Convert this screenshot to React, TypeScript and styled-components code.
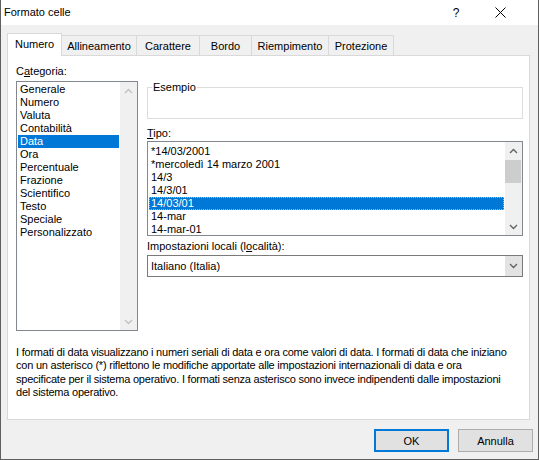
import React from 'react';
import styled, { createGlobalStyle } from 'styled-components';

const GlobalStyle = createGlobalStyle`
  html, body {
    margin: 0;
    padding: 0;
    background: #f0f0f0;
  }
  body {
    font-family: "Segoe UI", "Liberation Sans", Arial, sans-serif;
    font-size: 11px;
    color: #000000;
  }
  * {
    box-sizing: border-box;
  }
`;

const Window = styled.div`
  width: 539px;
  height: 460px;
  display: flex;
  flex-direction: column;
  background: #f0f0f0;
  border: 1px solid #5f5f5f;
  border-top: none;
`;

const TitleBar = styled.div`
  height: 25px;
  flex: none;
  display: flex;
  align-items: center;
  background: #ffffff;
  padding-left: 3px;
`;

const TitleText = styled.div`
  flex: 1;
  font-size: 11px;
  padding-bottom: 1px;
`;

const CaptionButton = styled.div`
  width: 44px;
  height: 25px;
  display: flex;
  align-items: center;
  justify-content: center;
  font-size: 12px;
  &:last-child {
    margin-right: 16px;
  }
`;

const Body = styled.div`
  flex: 1;
  display: flex;
  flex-direction: column;
  padding: 8px 6px 0 6px;
`;

const TabStrip = styled.div`
  height: 22px;
  display: flex;
  align-items: flex-end;
  position: relative;
  z-index: 1;
`;

const Tab = styled.div<{ $w: number; $active?: boolean }>`
  width: ${(p) => p.$w}px;
  height: ${(p) => (p.$active ? 23 : 20)}px;
  margin-bottom: ${(p) => (p.$active ? -1 : 0)}px;
  display: flex;
  align-items: center;
  justify-content: center;
  padding-top: ${(p) => (p.$active ? 0 : 1)}px;
  padding-bottom: ${(p) => (p.$active ? 2 : 0)}px;
  background: ${(p) => (p.$active ? '#ffffff' : '#f0f0f0')};
  border: 1px solid #d9d9d9;
  border-bottom: none;
  & + & {
    margin-left: -1px;
  }
`;

const Panel = styled.div`
  height: 365px;
  flex: none;
  margin-right: 2px;
  background: #ffffff;
  border: 1px solid #d9d9d9;
  padding: 9px 6px 0 8px;
  display: grid;
  grid-template-columns: 122px 376px;
  column-gap: 9px;
  align-content: start;
`;

const Column = styled.div`
  display: flex;
  flex-direction: column;
`;

const Label = styled.div<{ $gap?: number; $top?: number }>`
  height: 13px;
  line-height: 13px;
  margin-top: ${(p) => p.$top ?? 0}px;
  margin-bottom: ${(p) => p.$gap ?? 3}px;
  white-space: nowrap;
`;

const GroupBox = styled.fieldset`
  margin: 16px 0 0 0;
  height: 38px;
  padding: 0 4px;
  border: 1px solid #dcdcdc;
  min-width: 0;
`;

const Legend = styled.legend`
  padding: 0 1px;
  line-height: 13px;
`;

const ListBox = styled.div<{ $h: number }>`
  height: ${(p) => p.$h}px;
  border: 1px solid #828790;
  background: #ffffff;
  display: flex;
`;

const Items = styled.div<{ $top: number }>`
  flex: 1;
  padding: ${(p) => p.$top}px 1px 0 1px;
  overflow: hidden;
`;

const Item = styled.div<{ $selected?: boolean; $focus?: boolean }>`
  height: 13px;
  line-height: 13px;
  padding-left: 2px;
  white-space: nowrap;
  background: ${(p) => (p.$selected ? '#0078d7' : 'transparent')};
  color: ${(p) => (p.$selected ? '#ffffff' : '#000000')};
  outline: ${(p) => (p.$focus ? '1px dotted #f3b04a' : 'none')};
  outline-offset: -1px;
`;

const ScrollBar = styled.div`
  width: 17px;
  flex: none;
  background: #f0f0f0;
  display: flex;
  flex-direction: column;
`;

const ScrollArrow = styled.div`
  height: 17px;
  flex: none;
  display: flex;
  align-items: center;
  justify-content: center;
`;

const Track = styled.div`
  flex: 1;
`;

const Thumb = styled.div<{ $h: number }>`
  height: ${(p) => p.$h}px;
  margin: 1px 1px 0 0;
  background: #cdcdcd;
`;

const Combo = styled.div`
  height: 22px;
  border: 1px solid #7a7a7a;
  background: #ffffff;
  display: flex;
`;

const ComboText = styled.div`
  flex: 1;
  padding-left: 3px;
  display: flex;
  align-items: center;
`;

const ComboButton = styled.div`
  width: 17px;
  background: #e3e3e3;
  display: flex;
  align-items: center;
  justify-content: center;
`;

const Description = styled.div`
  grid-column: 1 / span 2;
  margin-top: 15px;
  line-height: 13.4px;
  letter-spacing: -0.22px;
  white-space: nowrap;
`;

const Footer = styled.div`
  display: flex;
  justify-content: flex-end;
  gap: 9px;
  padding-top: 9px;
  margin-right: -1px;
`;

const Button = styled.div<{ $default?: boolean }>`
  width: 75px;
  height: 23px;
  display: flex;
  align-items: center;
  justify-content: center;
  background: #e1e1e1;
  border: ${(p) => (p.$default ? '2px solid #0078d7' : '1px solid #adadad')};
`;

const Chevron = ({ up, color }: { up?: boolean; color: string }) => (
  <svg width="9" height="6" viewBox="0 0 9 6">
    <polyline
      points={up ? '1,5 4.5,1.5 8,5' : '1,1 4.5,4.5 8,1'}
      fill="none"
      stroke={color}
      strokeWidth="1.3"
    />
  </svg>
);

const categories = [
  'Generale',
  'Numero',
  'Valuta',
  'Contabilità',
  'Data',
  'Ora',
  'Percentuale',
  'Frazione',
  'Scientifico',
  'Testo',
  'Speciale',
  'Personalizzato',
];

const types = [
  '*14/03/2001',
  '*mercoledì 14 marzo 2001',
  '14/3',
  '14/3/01',
  '14/03/01',
  '14-mar',
  '14-mar-01',
];

const tabs = [
  { label: 'Numero', w: 55 },
  { label: 'Allineamento', w: 76 },
  { label: 'Carattere', w: 64 },
  { label: 'Bordo', w: 53 },
  { label: 'Riempimento', w: 78 },
  { label: 'Protezione', w: 66 },
];

const App: React.FC = () => {
  return (
    <>
      <GlobalStyle />
      <Window>
        <TitleBar>
          <TitleText>Formato celle</TitleText>
          <CaptionButton>?</CaptionButton>
          <CaptionButton>
            <svg width="11" height="11" viewBox="0 0 11 11">
              <path d="M0.5 0.5 L10.5 10.5 M10.5 0.5 L0.5 10.5" stroke="#000" strokeWidth="1" />
            </svg>
          </CaptionButton>
        </TitleBar>
        <Body>
          <TabStrip>
            {tabs.map((t, i) => (
              <Tab key={t.label} $w={t.w} $active={i === 0}>
                {t.label}
              </Tab>
            ))}
          </TabStrip>
          <Panel>
            <Column>
              <Label>
                C<u>a</u>tegoria:
              </Label>
              <ListBox $h={250}>
                <Items $top={1}>
                  {categories.map((c) => (
                    <Item key={c} $selected={c === 'Data'}>
                      {c}
                    </Item>
                  ))}
                </Items>
                <ScrollBar>
                  <ScrollArrow>
                    <Chevron up color="#c0c0c0" />
                  </ScrollArrow>
                  <Track />
                  <ScrollArrow>
                    <Chevron color="#c0c0c0" />
                  </ScrollArrow>
                </ScrollBar>
              </ListBox>
            </Column>
            <Column>
              <GroupBox>
                <Legend>Esempio</Legend>
              </GroupBox>
              <Label $top={8} $gap={1}>
                <u>T</u>ipo:
              </Label>
              <ListBox $h={95}>
                <Items $top={3}>
                  {types.map((t) => (
                    <Item key={t} $selected={t === '14/03/01'} $focus={t === '14/03/01'}>
                      {t}
                    </Item>
                  ))}
                </Items>
                <ScrollBar>
                  <ScrollArrow>
                    <Chevron up color="#606060" />
                  </ScrollArrow>
                  <Thumb $h={23} />
                  <Track />
                  <ScrollArrow>
                    <Chevron color="#606060" />
                  </ScrollArrow>
                </ScrollBar>
              </ListBox>
              <Label $top={4} $gap={2}>
                Impostazioni locali (l<u>o</u>calità):
              </Label>
              <Combo>
                <ComboText>Italiano (Italia)</ComboText>
                <ComboButton>
                  <Chevron color="#606060" />
                </ComboButton>
              </Combo>
            </Column>
            <Description>
              I formati di data visualizzano i numeri seriali di data e ora come valori di data. I formati di data che iniziano
              <br />
              con un asterisco (*) riflettono le modifiche apportate alle impostazioni internazionali di data e ora
              <br />
              specificate per il sistema operativo. I formati senza asterisco sono invece indipendenti dalle impostazioni
              <br />
              del sistema operativo.
            </Description>
          </Panel>
          <Footer>
            <Button $default>OK</Button>
            <Button>Annulla</Button>
          </Footer>
        </Body>
      </Window>
    </>
  );
};

export default App;
